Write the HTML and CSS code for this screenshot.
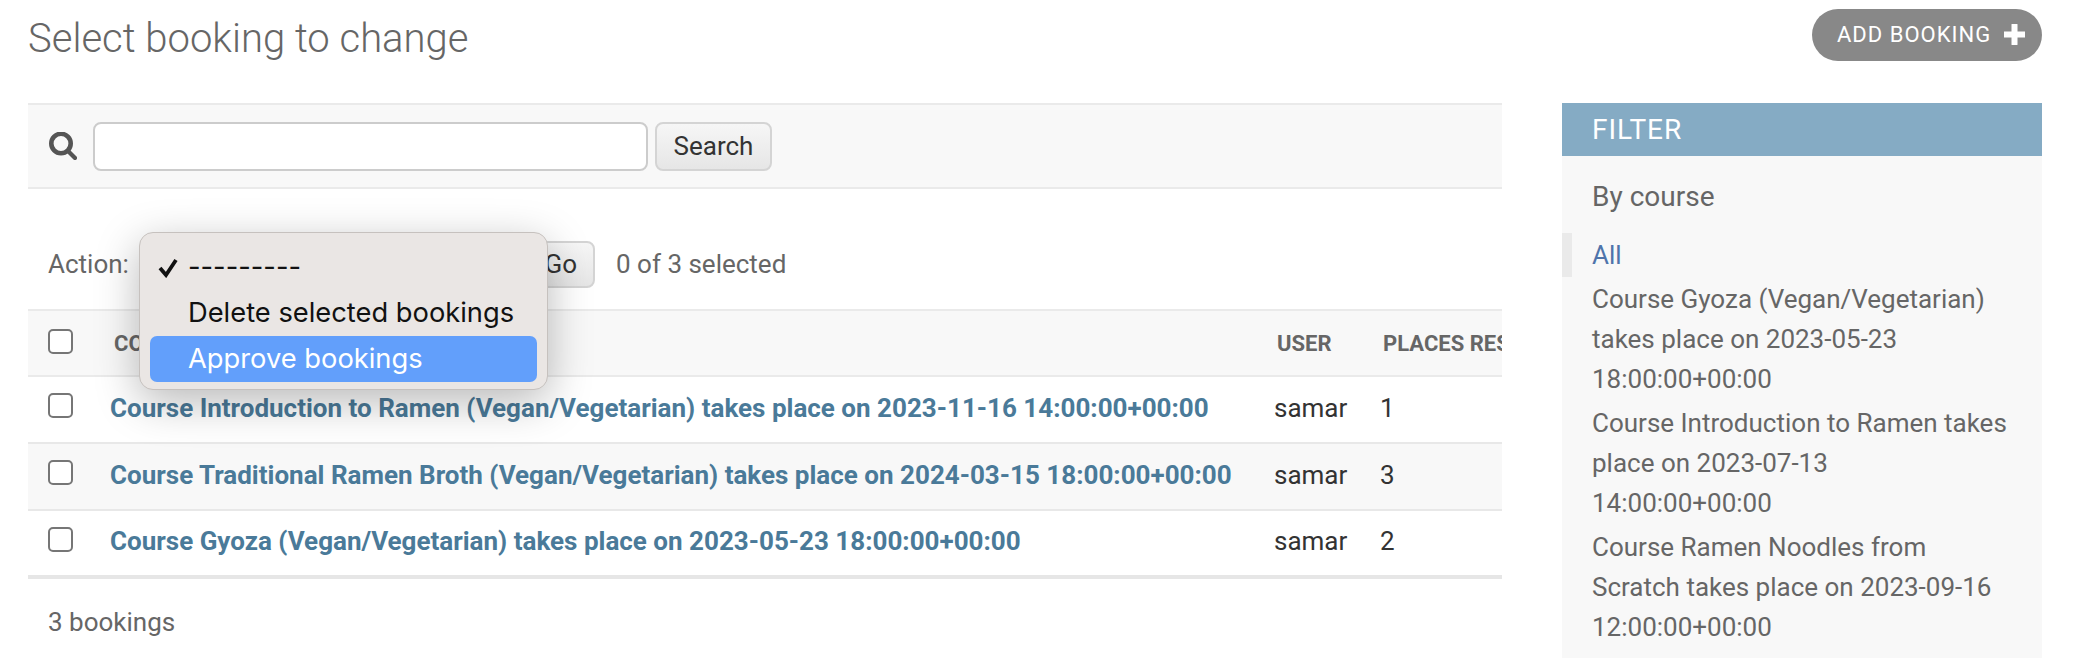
FILE: index.html
```html
<!DOCTYPE html>
<html lang="en">
<head>
<meta charset="utf-8">
<title>Select booking to change</title>
<link rel="stylesheet" href="styles.css">
</head>
<body>
<div class="page">
  <header class="page-head">
    <h1>Select booking to change</h1>
    <a class="add-btn" href="#">ADD BOOKING
      <svg class="plus" viewBox="0 0 21 21" width="21" height="21"><path d="M10.500 1v19M1 10.500h19" fill="none" stroke="#fff" stroke-width="6" stroke-linecap="round"/></svg>
    </a>
  </header>
  <div class="content">
    <main class="results">
      <form class="toolbar">
        <svg class="search-icon" viewBox="0 0 28 28" width="28" height="28"><circle cx="12" cy="11.500" r="9.700" fill="none" stroke="#555" stroke-width="4.600"/><path d="M19 19l7 7" stroke="#555" stroke-width="4.200" stroke-linecap="round"/></svg>
        <div class="search-input"></div>
        <button class="btn search-btn" type="button">Search</button>
      </form>
      <div class="actions">
        <span class="action-label">Action:</span>
        <div class="select-slot"></div>
        <button class="btn go-btn" type="button">Go</button>
        <span class="counter">0 of 3 selected</span>
        <ul class="menu">
          <li class="menu-item"><svg class="tick" viewBox="0 0 20 20" width="20" height="20"><path d="M2 10l6 7L18 2" fill="none" stroke="#111" stroke-width="3.800"/></svg>---------</li>
          <li class="menu-item">Delete selected bookings</li>
          <li class="menu-item active">Approve bookings</li>
        </ul>
      </div>
      <div class="table-wrap">
        <table class="list">
          <thead>
            <tr>
              <th class="c-check"><span class="box"></span></th>
              <th class="c-course">COURSE</th>
              <th class="c-user">USER</th>
              <th class="c-places">PLACES RESERVED</th>
            </tr>
          </thead>
          <tbody>
            <tr>
              <td><span class="box"></span></td>
              <td><a href="#">Course Introduction to Ramen (Vegan/Vegetarian) takes place on 2023-11-16 14:00:00+00:00</a></td>
              <td>samar</td><td>1</td>
            </tr>
            <tr class="alt">
              <td><span class="box"></span></td>
              <td><a href="#">Course Traditional Ramen Broth (Vegan/Vegetarian) takes place on 2024-03-15 18:00:00+00:00</a></td>
              <td>samar</td><td>3</td>
            </tr>
            <tr>
              <td><span class="box"></span></td>
              <td><a href="#">Course Gyoza (Vegan/Vegetarian) takes place on 2023-05-23 18:00:00+00:00</a></td>
              <td>samar</td><td>2</td>
            </tr>
          </tbody>
        </table>
      </div>
      <p class="paginator">3 bookings</p>
    </main>
    <aside class="filter">
      <h2>FILTER</h2>
      <h3>By course</h3>
      <ul class="filter-list">
        <li class="selected"><a href="#">All</a></li>
        <li><a href="#">Course Gyoza (Vegan/Vegetarian) takes place on 2023-05-23 18:00:00+00:00</a></li>
        <li><a href="#">Course Introduction to Ramen takes place on 2023-07-13 14:00:00+00:00</a></li>
        <li><a href="#">Course Ramen Noodles from Scratch takes place on 2023-09-16 12:00:00+00:00</a></li>
      </ul>
    </aside>
  </div>
</div>
</body>
</html>
```
FILE: styles.css
```css
* { box-sizing: border-box; }
html, body { margin: 0; height: 100%; overflow: hidden; background: #fff; }
body { font-family: Roboto, "Liberation Sans", sans-serif; color: #333; font-size: 26px; }
a { text-decoration: none; color: inherit; }
ul { list-style: none; margin: 0; padding: 0; }

.page { height: 658px; padding: 9px 48px 0 28px; display: flex; flex-direction: column; }
.page-head { display: flex; justify-content: space-between; align-items: flex-start; height: 94px; }
h1 { margin: 9px 0 0; font-weight: 300; font-size: 40px; line-height: 42px; color: #666; }
.add-btn { display: flex; align-items: center; justify-content: space-between; height: 52px; width: 230px; padding: 0 17px 2px 25px; border-radius: 26px; background: #888; color: #fff; font-size: 22px; letter-spacing: 1px; white-space: nowrap; }
.plus { flex: none; }

.content { flex: 1; display: flex; justify-content: space-between; min-height: 0; }
.results { width: 1474px; }

.toolbar { display: flex; align-items: center; height: 86px; padding: 0 20px 0 21px; background: #f8f8f8; border-top: 2px solid #eaeaea; border-bottom: 2px solid #eaeaea; }
.search-icon { flex: none; margin-right: 16px; }
.search-input { width: 555px; height: 49px; background: #fff; border: 2px solid #ccc; border-radius: 8px; }
.btn { font-family: Roboto, "Liberation Sans", sans-serif; font-size: 26px; color: #333; border: 2px solid #d4d4d4; border-radius: 8px; background: linear-gradient(#f6f6f6, #e6e6e6); padding: 0; }
.search-btn { width: 117px; height: 49px; margin-left: 7px; }

.actions { position: relative; display: flex; align-items: center; height: 120px; padding: 30px 0 0 20px; color: #666; }
.action-label { width: 91px; }
.select-slot { width: 401px; }
.go-btn { width: 55px; height: 47px; text-align: right; padding-right: 16px; }
.counter { margin-left: 21px; }

.menu { position: absolute; left: 111px; top: 43px; width: 409px; height: 158px; padding: 11px 10px 9px; background: #eae6e4; border: 1px solid #c6c1be; border-radius: 14px; box-shadow: 0 12px 44px rgba(0, 0, 0, .28); z-index: 5; font-family: Inter, Roboto, sans-serif; font-size: 27.300px; color: #111; display: flex; flex-direction: column; }
.menu-item { position: relative; height: 46px; line-height: 46px; padding-left: 38px; border-radius: 7px; }
.menu-item.active { background: #629ffb; color: #fff; }
.tick { position: absolute; left: 8px; top: 14px; }

.table-wrap { overflow: hidden; }
.list { border-collapse: collapse; table-layout: fixed; width: 1600px; }
.box { display: block; width: 25px; height: 25px; background: #fff; border: 2px solid #767676; border-radius: 5px; margin-bottom: 4px; }
.c-check { width: 82px; }
.c-course { width: 1147px; }
.c-user { width: 106px; }
.c-places { width: 265px; }
th { height: 66px; padding: 0 0 0 20px; text-align: left; font-size: 22px; font-weight: 700; color: #666; background: #f8f8f8; border-top: 2px solid #eaeaea; border-bottom: 2px solid #eaeaea; white-space: nowrap; }
th.c-course { padding-left: 4px; }
td { height: 67px; padding: 0 0 4px 17px; border-bottom: 2px solid #e8e8e8; white-space: nowrap; color: #333; }
td:first-child { padding-left: 20px; }
td:nth-child(2) { padding-left: 0; }
td a { color: #4a7a99; font-weight: 700; }
tr.alt td { background: #f8f8f8; }
tbody tr:last-child td { border-bottom: 4px solid #e6e6e6; }

.paginator { margin: 28px 0 0 20px; line-height: 30px; color: #666; }

.filter { width: 480px; background: #f8f8f8; color: #666; }
.filter h2 { margin: 0; height: 53px; line-height: 53px; padding-left: 30px; background: #85abc4; color: #fff; font-size: 28px; font-weight: 400; letter-spacing: 1px; }
.filter h3 { margin: 0; padding: 23px 0 0 30px; line-height: 36px; font-size: 28px; font-weight: 400; }
.filter-list { margin-top: 18px; }
.filter-list li { line-height: 40px; padding: 0 33px 0 30px; margin-bottom: 4px; }
.filter-list li.selected { border-left: 10px solid #eaeaea; padding-left: 20px; color: #4f74ab; height: 44px; line-height: 44px; margin-bottom: 2px; }
```
